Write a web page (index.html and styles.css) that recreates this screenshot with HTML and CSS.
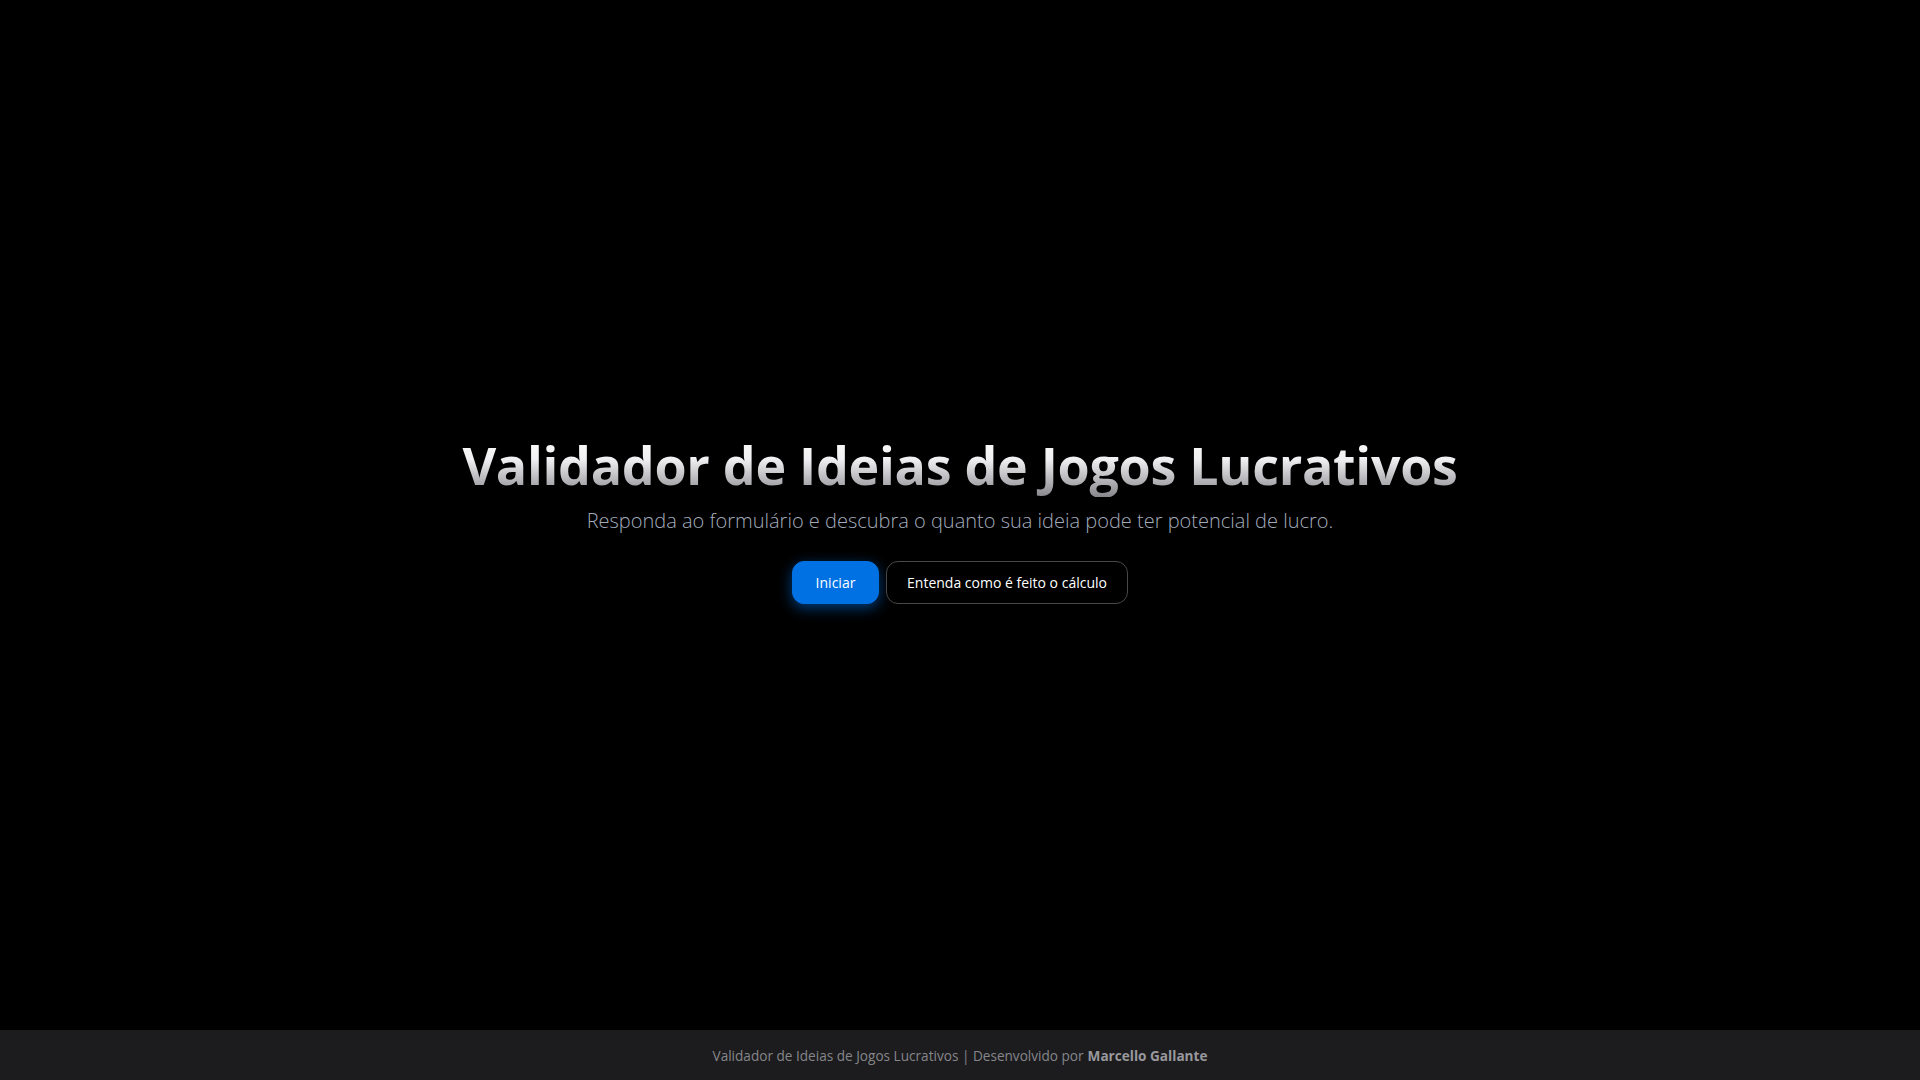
FILE: index.html
```html
<!DOCTYPE html>
<html lang="pt-BR">
<head>
<meta charset="utf-8">
<title>Validador de Ideias de Jogos Lucrativos</title>
<link rel="stylesheet" href="styles.css">
</head>
<body>
<main class="hero">
  <h1 class="title">Validador de Ideias de Jogos Lucrativos</h1>
  <p class="subtitle">Responda ao formulário e descubra o quanto sua ideia pode ter potencial de lucro.</p>
  <div class="actions">
    <button class="btn btn-primary">Iniciar</button>
    <button class="btn btn-outline">Entenda como é feito o cálculo</button>
  </div>
</main>
<footer class="footer">
  Validador de Ideias de Jogos Lucrativos | Desenvolvido por <strong>Marcello Gallante</strong>
</footer>
</body>
</html>
```
FILE: styles.css
```css
* { box-sizing: border-box; }
html, body { height: 100%; }
body {
  margin: 0;
  background: #000;
  color: #fff;
  font-family: "Open Sans", "Noto Sans", sans-serif;
  display: flex;
  flex-direction: column;
}
.hero {
  flex: 1;
  display: flex;
  flex-direction: column;
  align-items: center;
  justify-content: center;
  padding-top: 8px;
}
.title {
  margin: 0;
  font-size: 52px;
  font-weight: 700;
  line-height: 1.2;
  letter-spacing: -0.3px;
  background: linear-gradient(180deg, #ffffff 0%, #f0f0f2 40%, #86868b 100%);
  -webkit-background-clip: text;
  background-clip: text;
  color: transparent;
}
.subtitle {
  margin: 10px 0 0;
  font-size: 20px;
  font-weight: 300;
  color: #a3abbb;
}
.actions {
  display: flex;
  gap: 7px;
  margin-top: 27px;
}
.btn {
  font-family: "Open Sans", "Noto Sans", sans-serif;
  font-size: 14px;
  height: 43px;
  border-radius: 12px;
  cursor: pointer;
  padding: 0;
}
.btn-primary {
  background: #0071e3;
  color: #fff;
  border: 1px solid #0071e3;
  width: 87px;
  box-shadow: 0 4px 14px rgba(0, 113, 227, 0.55);
}
.btn-outline {
  background: #000;
  color: #fff;
  border: 1px solid #48484a;
  width: 242px;
}
.footer {
  height: 50px;
  flex: 0 0 50px;
  background: #1c1c1e;
  display: flex;
  align-items: center;
  justify-content: center;
  font-size: 13.6px;
  color: #86868b;
}
.footer strong {
  color: #98989d;
  font-weight: 700;
  margin-left: 4px;
}
```
